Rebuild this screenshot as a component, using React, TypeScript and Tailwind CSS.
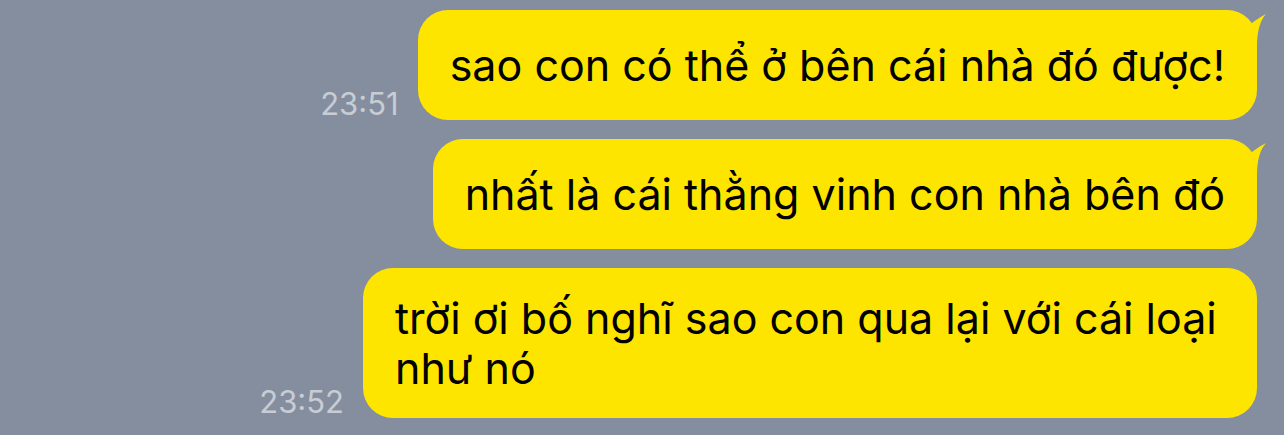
import React from "react";

type Msg = { text: string; time?: string; tail?: boolean };

const messages: Msg[] = [
  { text: "sao con có thể ở bên cái nhà đó được!", time: "23:51", tail: true },
  { text: "nhất là cái thằng vinh con nhà bên đó", tail: true },
  { text: "trời ơi bố nghĩ sao con qua lại với cái loại như nó", time: "23:52" },
];

function Tail() {
  return (
    <svg
      className="absolute right-[-12px] top-0"
      width="32"
      height="40"
      viewBox="0 0 32 40"
      fill="#fee500"
    >
      <path d="M5 22 Q17 10 29 4 Q20 14 20 36 L5 36 Z" />
    </svg>
  );
}

export default function App() {
  return (
    <div
      className="flex h-[435px] w-[1284px] flex-col items-end gap-[19px] bg-[#858e9e] pr-[27px] pt-[10px]"
      style={{ fontFamily: "Inter, 'Noto Sans', sans-serif" }}
    >
      {messages.map((m, i) => (
        <div key={i} className="flex items-end gap-[19px]">
          {m.time && (
            <span className="mb-[1px] text-[31px] leading-none text-[#c7ccd5]">{m.time}</span>
          )}
          <div className="relative flex min-h-[110px] max-w-[894px] items-center rounded-[30px] bg-[#fee500] px-[32px] py-[25px] text-[43px] leading-[50px] text-black">
            {m.tail && <Tail />}
            <span className="relative">{m.text}</span>
          </div>
        </div>
      ))}
    </div>
  );
}
